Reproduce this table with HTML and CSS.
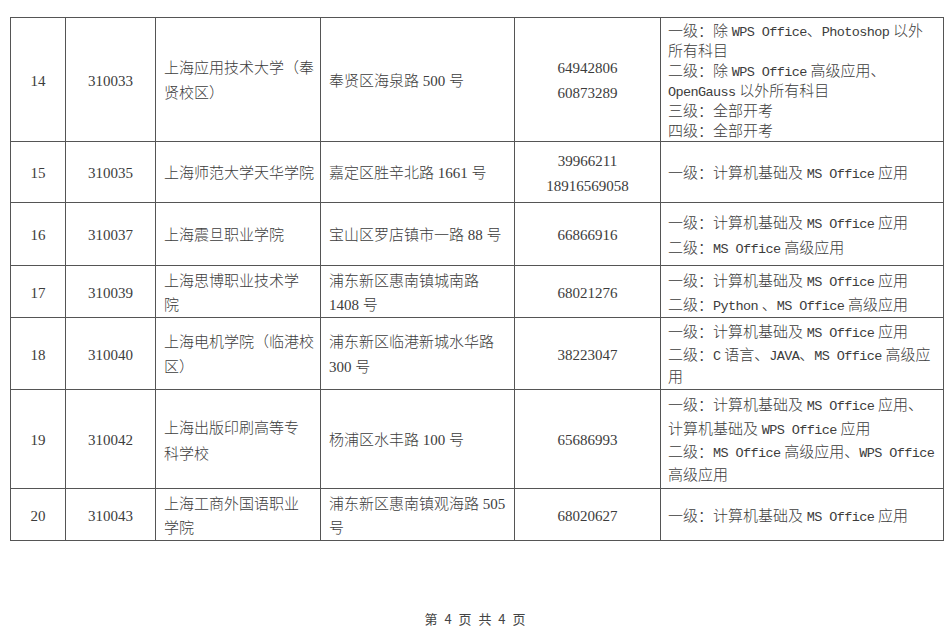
FILE: index.html
```html
<!DOCTYPE html>
<html lang="zh-CN">
<head>
<meta charset="utf-8">
<title>第 4 页</title>
<link rel="stylesheet" href="styles.css">
</head>
<body>
<div class="page">
  <table class="grid">
    <colgroup>
      <col class="c-no"><col class="c-code"><col class="c-name"><col class="c-addr"><col class="c-tel"><col class="c-lvl">
    </colgroup>
    <tbody>
      <tr class="r14">
        <td class="ctr">14</td>
        <td class="ctr">310033</td>
        <td class="txt">上海应用技术大学（奉<br>贤校区）</td>
        <td class="txt">奉贤区海泉路 500 号</td>
        <td class="ctr tel">64942806<br>60873289</td>
        <td class="lvl tight">一级：除 <span class="m">WPS Office</span>、<span class="m">Photoshop</span> 以外<br>所有科目<br>二级：除 <span class="m">WPS Office</span> 高级应用、<br><span class="m">OpenGauss</span> 以外所有科目<br>三级：全部开考<br>四级：全部开考</td>
      </tr>
      <tr class="r15">
        <td class="ctr">15</td>
        <td class="ctr">310035</td>
        <td class="txt">上海师范大学天华学院</td>
        <td class="txt">嘉定区胜辛北路 1661 号</td>
        <td class="ctr tel">39966211<br>18916569058</td>
        <td class="lvl">一级：计算机基础及 <span class="m">MS Office</span> 应用</td>
      </tr>
      <tr class="r16">
        <td class="ctr">16</td>
        <td class="ctr">310037</td>
        <td class="txt">上海震旦职业学院</td>
        <td class="txt">宝山区罗店镇市一路 88 号</td>
        <td class="ctr tel">66866916</td>
        <td class="lvl">一级：计算机基础及 <span class="m">MS Office</span> 应用<br>二级：<span class="m">MS Office</span> 高级应用</td>
      </tr>
      <tr class="r17 two">
        <td class="ctr">17</td>
        <td class="ctr">310039</td>
        <td class="txt">上海思博职业技术学<br>院</td>
        <td class="txt">浦东新区惠南镇城南路<br>1408 号</td>
        <td class="ctr tel">68021276</td>
        <td class="lvl">一级：计算机基础及 <span class="m">MS Office</span> 应用<br>二级：<span class="m">Python</span> 、<span class="m">MS Office</span> 高级应用</td>
      </tr>
      <tr class="r18">
        <td class="ctr">18</td>
        <td class="ctr">310040</td>
        <td class="txt">上海电机学院（临港校<br>区）</td>
        <td class="txt">浦东新区临港新城水华路<br>300 号</td>
        <td class="ctr tel">38223047</td>
        <td class="lvl three">一级：计算机基础及 <span class="m">MS Office</span> 应用<br>二级：<span class="m">C</span> 语言、<span class="m">JAVA</span>、<span class="m">MS Office</span> 高级应<br>用</td>
      </tr>
      <tr class="r19">
        <td class="ctr">19</td>
        <td class="ctr">310042</td>
        <td class="txt loose">上海出版印刷高等专<br>科学校</td>
        <td class="txt">杨浦区水丰路 100 号</td>
        <td class="ctr tel">65686993</td>
        <td class="lvl four">一级：计算机基础及 <span class="m">MS Office</span> 应用、<br>计算机基础及 <span class="m">WPS Office</span> 应用<br>二级：<span class="m">MS Office</span> 高级应用、<span class="m">WPS Office</span><br>高级应用</td>
      </tr>
      <tr class="r20 two">
        <td class="ctr">20</td>
        <td class="ctr">310043</td>
        <td class="txt">上海工商外国语职业<br>学院</td>
        <td class="txt">浦东新区惠南镇观海路 505<br>号</td>
        <td class="ctr tel">68020627</td>
        <td class="lvl">一级：计算机基础及 <span class="m">MS Office</span> 应用</td>
      </tr>
    </tbody>
  </table>
  <footer class="pager">第 4 页 共 4 页</footer>
</div>
</body>
</html>
```
FILE: styles.css
```css
html, body {
  margin: 0;
  padding: 0;
  background: #ffffff;
}

.page {
  width: 950px;
  height: 631px;
  box-sizing: border-box;
  padding: 17px 0 0 10px;
  font-family: "Liberation Serif", "Noto Sans CJK SC", serif;
  font-size: 15px;
  font-weight: 300;
  color: #3c3c3c;
}

.grid {
  border-collapse: collapse;
  table-layout: fixed;
  width: 933px;
}

.grid td {
  border: 1px solid #555555;
  padding: 3px 0 0 0;
  vertical-align: middle;
  line-height: 25px;
  white-space: nowrap;
}

.c-no { width: 55px; }
.c-code { width: 90px; }
.c-name { width: 165px; }
.c-addr { width: 194px; }
.c-tel { width: 146px; }
.c-lvl { width: 283px; }

.r14 { height: 124px; }
.r15 { height: 61px; }
.r16 { height: 63px; }
.r17 { height: 52px; }
.r18 { height: 72px; }
.r19 { height: 99px; }
.r20 { height: 52px; }

.grid .two td {
  line-height: 24px;
}

.grid td.ctr {
  text-align: center;
}

.grid td.txt {
  padding-left: 8px;
  text-align: left;
}

.grid td.loose {
  line-height: 26px;
}

.grid td.lvl {
  padding-left: 7px;
  text-align: left;
}

.grid td.tight {
  line-height: 20px;
}

.grid td.three {
  line-height: 22.6px;
}

.grid td.four {
  line-height: 23.3px;
  padding-top: 4px;
}

.m {
  font-family: "Liberation Mono", monospace;
  font-size: 13.5px;
  letter-spacing: -0.6px;
  line-height: 1;
}

.pager {
  margin-top: 70px;
  margin-right: 10px;
  text-align: center;
  font-family: "Noto Sans CJK SC", sans-serif;
  font-size: 13px;
  font-weight: 400;
  line-height: 16px;
  word-spacing: 4px;
  color: #444444;
}
```
